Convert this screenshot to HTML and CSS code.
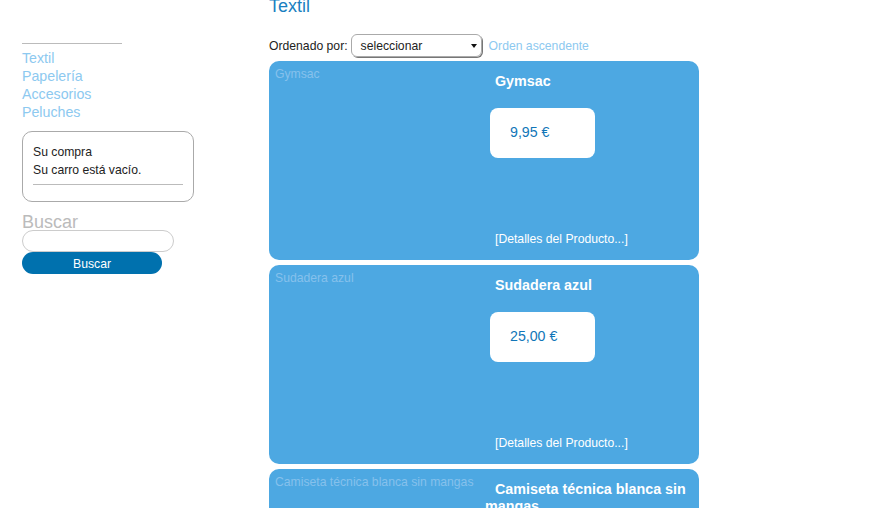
FILE: index.html
```html
<!DOCTYPE html>
<html lang="es">
<head>
  <meta charset="UTF-8">
  <title>Textil</title>
  <link rel="stylesheet" href="styles.css">
</head>
<body>
  <div class="page">
    <div class="sidebar">
      <hr class="menu-rule">
      <ul class="categories">
        <li><a href="#">Textil</a></li>
        <li><a href="#">Papelería</a></li>
        <li><a href="#">Accesorios</a></li>
        <li><a href="#">Peluches</a></li>
      </ul>

      <div class="cart">
        <div>Su compra</div>
        <div>Su carro está vacío.</div>
        <hr class="cart-rule">
      </div>

      <h3 class="search-title">Buscar</h3>
      <input class="search-input" type="text">
      <button class="search-button">Buscar</button>
    </div>

    <div class="main">
      <h1 class="category-title">Textil</h1>

      <div class="sort-row">
        <span>Ordenado por:</span>
        <div class="select">seleccionar<span class="arrow"></span></div>
        <a class="sort-link" href="#">Orden ascendente</a>
      </div>

      <div class="product">
        <div class="product-image">Gymsac</div>
        <div class="product-info">
          <h2 class="product-name">Gymsac</h2>
          <div class="price">9,95 €</div>
          <a class="details" href="#">[Detalles del Producto...]</a>
        </div>
      </div>

      <div class="product">
        <div class="product-image">Sudadera azul</div>
        <div class="product-info">
          <h2 class="product-name">Sudadera azul</h2>
          <div class="price">25,00 €</div>
          <a class="details" href="#">[Detalles del Producto...]</a>
        </div>
      </div>

      <div class="product">
        <div class="product-image">Camiseta técnica blanca sin mangas</div>
        <div class="product-info">
          <h2 class="product-name">Camiseta técnica blanca sin mangas</h2>
          <div class="price">12,50 €</div>
          <a class="details" href="#">[Detalles del Producto...]</a>
        </div>
      </div>
    </div>
  </div>
</body>
</html>
```

FILE: styles.css
```css
body { margin: 0; font-family: "Liberation Sans", Arial, sans-serif; font-size: 12.2px; color: #222; background: #fff; }
a { text-decoration: none; }
.page { display: flex; padding-left: 22px; }

.sidebar { width: 247px; flex-shrink: 0; padding-top: 43px; }
.menu-rule { width: 100px; margin: 0; border: 0; border-top: 1px solid #bbb; }
.categories { list-style: none; margin: 5px 0 0; padding: 0; font-size: 14.2px; line-height: 18px; }
.categories a { color: #8dc9f0; }
.cart { width: 150px; margin-top: 10px; padding: 11px 10px 16px; border: 1px solid #aaa; border-radius: 10px; line-height: 18px; }
.cart-rule { margin: 5px 0 0; border: 0; border-top: 1px solid #bbb; }
.search-title { margin: 13px 0 0; font-size: 18px; font-weight: normal; line-height: 15px; color: #bbb; }
.search-input { display: block; box-sizing: border-box; width: 152px; height: 22px; margin: 0; border: 1px solid #ccc; border-radius: 11px; background: #fff; }
.search-button { display: block; width: 140px; height: 22px; margin: 0; padding: 1px 0 0; border: 0; border-radius: 11px; background: #0071ae; color: #fff; font-family: inherit; font-size: 12.2px; }

.main { width: 430px; }
.category-title { margin: -4px 0 0; font-size: 18px; font-weight: normal; line-height: 20px; color: #1a7fc1; }
.sort-row { display: flex; align-items: center; margin-top: 18px; height: 23px; }
.select { position: relative; box-sizing: border-box; width: 131px; height: 23px; margin-left: 3px; padding: 2px 0 0 9px; border: 1px solid #aaa; border-radius: 6px; box-shadow: 1px 1px 0 #777; line-height: 19px; color: #222; }
.arrow { position: absolute; right: 4px; top: 9px; border-left: 3px solid transparent; border-right: 3px solid transparent; border-top: 4px solid #111; }
.sort-link { margin-left: 7px; color: #8dc9f0; }

.product { display: flex; height: 199px; margin-top: 5px; border-radius: 10px; background: #4da8e2; overflow: hidden; }
.sort-row + .product { margin-top: 4px; }
.product-image { width: 210px; flex-shrink: 0; padding: 7px 0 0 6px; color: #86c1ec; line-height: 12px; }
.product-info { display: flex; flex-direction: column; align-items: flex-start; width: 210px; }
.product-name { margin: 12px 0 0; font-size: 14.3px; line-height: 17px; text-indent: 10px; color: #fff; }
.price { box-sizing: border-box; width: 105px; height: 50px; margin: 18px 0 0 5px; padding: 16px 0 0 20px; border-radius: 8px; background: #fff; font-size: 14.2px; line-height: 16px; color: #1176b8; }
.details { margin: 74px 0 0 10px; line-height: 14px; color: #fff; }
```
